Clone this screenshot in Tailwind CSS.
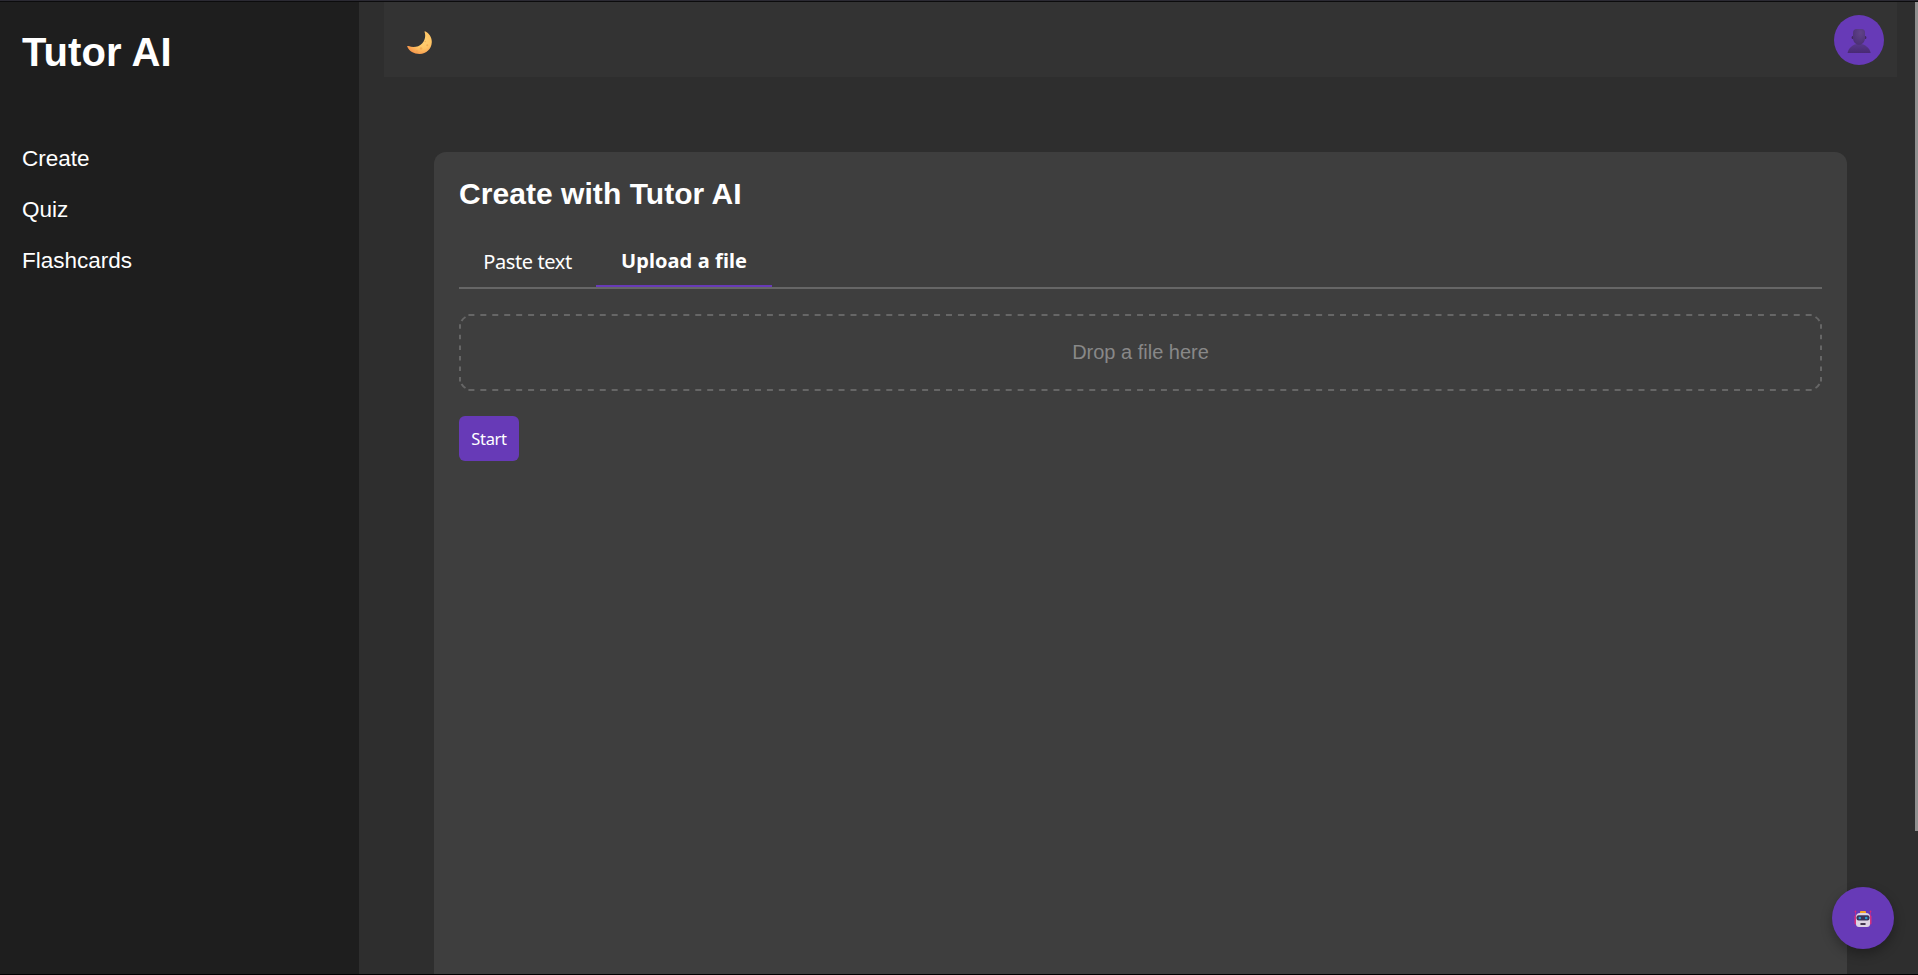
<!DOCTYPE html>
<html lang="en">
<head>
<meta charset="utf-8">
<title>Tutor AI</title>
<script src="https://cdn.jsdelivr.net/npm/@tailwindcss/browser@4"></script>
</head>
<body class="h-screen overflow-hidden bg-[#2e2e2e] font-['Liberation_Sans',Arial,sans-serif] text-white">
<div class="relative flex h-screen flex-col">
  <div class="h-px shrink-0 bg-[#2b2a33]"></div>
  <div class="h-px shrink-0 bg-[#0c0c0d]"></div>
  <div class="flex min-h-0 flex-1">
    <aside class="w-[359px] shrink-0 bg-[#1e1e1e] pl-[22px] pt-[27px]">
      <h1 class="text-[40px] font-bold leading-[46px] tracking-[0.1px]">Tutor AI</h1>
      <nav class="mt-[58px] flex flex-col text-[22.5px] leading-[51px]">
        <a>Create</a>
        <a>Quiz</a>
        <a>Flashcards</a>
      </nav>
    </aside>
    <div class="flex min-w-0 flex-1 flex-col pl-[25px] pr-[21px]">
      <header class="flex h-[75px] shrink-0 items-center justify-between bg-[#333333] pl-[23px] pr-[13px]">
        <svg class="mt-[7px] h-[25px] w-[25px]" viewBox="0 0 25 25">
          <defs><radialGradient id="moon" cx="62%" cy="40%" r="65%"><stop offset="0" stop-color="#ffd275"/><stop offset=".55" stop-color="#ffc565"/><stop offset="1" stop-color="#f7984c"/></radialGradient></defs>
          <path d="M18 .3C22.300 2.300 25 6.500 24.800 11.300C24.500 18 19.300 23 12.700 23C6.800 23 2.100 20.100.3 15.800C-.1 14.900.8 14.700 1.600 15.100C6.500 16.900 11.800 15.900 15.100 12.400C18.100 9.300 18.900 5.100 17.600 1.100Q17.400.1 18 .3Z" fill="url(#moon)"/>
          <g fill="#eda24e" opacity=".65"><circle cx="14" cy="17.500" r="1.300"/><circle cx="20.300" cy="14.300" r="1"/><circle cx="18.300" cy="10.500" r=".8"/><circle cx="10" cy="20" r=".8"/></g>
        </svg>
        <div class="flex h-[50px] w-[50px] items-center justify-center rounded-full bg-[#673ab7]">
          <svg class="mt-[2px] h-[26px] w-[26px]" viewBox="0 0 26 26">
            <defs><radialGradient id="face" cx="62%" cy="25%" r="80%"><stop offset="0" stop-color="#604289"/><stop offset="1" stop-color="#4b3074"/></radialGradient>
            <linearGradient id="bust" x1="0" y1="0" x2="0" y2="1"><stop offset="0" stop-color="#57388a"/><stop offset="1" stop-color="#492a74"/></linearGradient></defs>
            <path d="M1.500 25C2.500 20.500 6.500 15.800 13 15.800C19.500 15.800 23.700 20.500 24.700 25Z" fill="url(#bust)"/>
            <ellipse cx="6.600" cy="9.500" rx="1" ry="1.600" fill="#42285f"/><ellipse cx="19.400" cy="9.500" rx="1" ry="1.600" fill="#42285f"/>
            <path d="M7 4.500Q7.300 1 10.500 1H15.500Q19 1 19 4.500V10C19 13.500 16.500 16.800 13 16.800S7 13.500 7 10Z" fill="url(#face)"/>
          </svg>
        </div>
      </header>
      <main class="mx-[50px] mt-[75px] min-h-0 flex-1 rounded-t-xl bg-[#3e3e3e] px-[25px] pt-[24px]">
        <h2 class="text-[30px] font-bold leading-[35px] tracking-[0.05px]">Create with Tutor AI</h2>
        <div class="mt-[26px] flex h-[52px] border-b-2 border-[#666666] font-['Noto_Sans',sans-serif] text-[20px]">
          <button class="w-[137px] whitespace-nowrap pb-px tracking-[-0.4px]">Paste text</button>
          <button class="w-[176px] whitespace-nowrap border-b-2 border-[#673ab7] font-bold tracking-[0.1px]">Upload a file</button>
        </div>
        <div class="relative mt-[25px] flex h-[77px] items-center justify-center pb-[2px] text-[20px] text-[#888888]">
          <!-- dashed outline of the drop zone -->
          <svg class="absolute inset-0 h-[77px] w-[1363px]" viewBox="0 0 1363 77" fill="none" stroke="#666666" stroke-width="2">
            <path d="M9.400 1H1354M9.400 76H1354" stroke-dasharray="6 5.940"/>
            <path d="M1 10.300V67.500M1362 10.300V67.500" stroke-dasharray="4.500 6.040"/>
            <path d="M2.500 7Q4 4.500 6.500 3M1360.500 7Q1359 4.500 1356.500 3M2.500 70Q4 72.500 6.500 74M1360.500 70Q1359 72.500 1356.500 74"/>
          </svg>
          Drop a file here
        </div>
        <button class="mt-[25px] flex h-[45px] w-[60px] items-center justify-center rounded-md bg-[#673ab7] pt-[2px] font-['Noto_Sans',sans-serif] text-[16.5px] tracking-[-0.35px]">Start</button>
      </main>
    </div>
  </div>
  <div class="h-px shrink-0 bg-black"></div>
  <div class="absolute right-0 top-[2px] h-[829px] w-[3px] bg-[#8f8f8f]"></div>
  <button class="absolute left-[1832px] top-[887px] flex h-[62px] w-[62px] items-center justify-center rounded-full bg-[#673ab7] pt-px shadow-[0_5px_12px_rgba(0,0,0,0.3)]">
    <svg class="h-[18px] w-[18px]" viewBox="0 0 18 18">
      <path d="M1.500 1V6M16.500 1V6" stroke="#a92da0" stroke-width="1"/>
      <circle cx="1.500" cy="1.500" r=".9" fill="#dc2974"/><circle cx="16.500" cy="1.500" r=".9" fill="#dc2974"/>
      <rect x=".5" y="5.500" width="3" height="9" rx="1" fill="#d8307f"/><rect x="14.500" y="5.500" width="3" height="9" rx="1" fill="#d8307f"/>
      <path d="M6 3.500V2Q6 1 7 1H11Q12 1 12 2V3.500Z" fill="#f7a928"/>
      <path d="M2 7Q2 3 6 3H12Q16 3 16 7V14Q16 17 13 17H5Q2 17 2 14Z" fill="#ddd3e4"/>
      <rect x="2.500" y="5.300" width="13" height="5.200" rx="2" fill="#3a3459"/>
      <circle cx="5.800" cy="8" r="1.300" fill="#269bd0"/><circle cx="12.200" cy="8" r="1.300" fill="#269bd0"/>
      <rect x="6.300" y="13" width="5.400" height="1.900" rx=".7" fill="#42364f"/>
    </svg>
  </button>
</div>
</body>
</html>
